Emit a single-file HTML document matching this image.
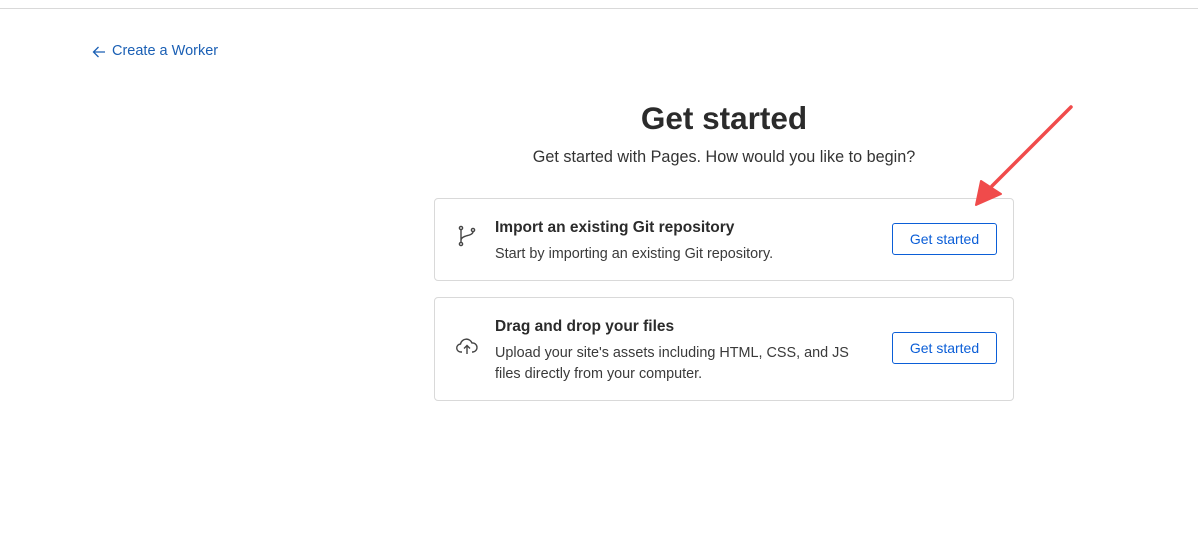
<!DOCTYPE html>
<html><head><meta charset="utf-8"><style>
*{margin:0;padding:0;box-sizing:border-box}
body{width:1198px;height:536px;background:#fff;font-family:"Liberation Sans",sans-serif;position:relative;overflow:hidden;color:#313131}
.top{position:absolute;left:0;top:8px;width:1198px;height:1px;background:#d9d9d9}
.back{position:absolute;left:112px;top:43px;font-size:14.5px;color:#1a5fb4}
h1{position:absolute;left:0;width:1448px;text-align:center;top:100px;font-size:31.5px;font-weight:bold;color:#2b2b2b}
.sub{position:absolute;left:0;width:1448px;text-align:center;top:148px;font-size:16.2px;color:#333}
.card{position:absolute;left:434px;width:580px;border:1px solid #d9d9d9;border-radius:4px}
.t{position:absolute;left:60px;font-size:15.5px;font-weight:bold;color:#2b2b2b}
.d{position:absolute;left:60px;font-size:14.4px;line-height:21px;color:#3a3a3a}
.btn{position:absolute;left:457px;width:105px;height:32px;border:1px solid #0b5ed7;border-radius:3px;color:#0b5ed7;font-size:14px;text-align:center;line-height:30px}
svg.ic{position:absolute;left:20px}
</style></head><body>
<div class="top"></div>
<svg style="position:absolute;left:92px;top:45px" width="14" height="14" viewBox="0 0 14 14" fill="none" stroke="#1a5fb4" stroke-width="1.3"><path d="M13 7H1.5M6.5 2L1.5 7l5 5"/></svg>
<div class="back">Create a Worker</div>
<h1>Get started</h1>
<div class="sub">Get started with Pages. How would you like to begin?</div>
<div class="card" style="top:198px;height:83px">
<svg class="ic" style="top:25px" width="24" height="24" viewBox="0 0 24 24" fill="none" stroke="#444" stroke-width="1.4"><circle cx="6" cy="4" r="1.6"/><circle cx="6" cy="20" r="1.6"/><circle cx="18" cy="6" r="1.6"/><path d="M6 5.6V18.4M18 7.6c0 5-12 3-12 9"/></svg>
<div class="t" style="top:20px">Import an existing Git repository</div>
<div class="d" style="top:45px">Start by importing an existing Git repository.</div>
<div class="btn" style="top:24px">Get started</div>
</div>
<div class="card" style="top:297px;height:104px">
<svg class="ic" style="top:36px" width="24" height="24" viewBox="0 0 24 24" fill="none" stroke="#444" stroke-width="1.4"><path d="M7 18H6a4 4 0 0 1-.5-8A6 6 0 0 1 17 9a4.5 4.5 0 0 1 1 9h-1"/><path d="M12 20v-8M9 14.5l3-3 3 3"/></svg>
<div class="t" style="top:20px">Drag and drop your files</div>
<div class="d" style="top:45px">Upload your site's assets including HTML, CSS, and JS<br>files directly from your computer.</div>
<div class="btn" style="top:34px">Get started</div>
</div>
<svg style="position:absolute;left:0;top:0" width="1198" height="536"><path d="M1071 107L992 186" stroke="#f04b4b" stroke-width="3.5" stroke-linecap="round"/><path d="M976 205L981 181L1001 194Z" fill="#f04b4b" stroke="#f04b4b" stroke-width="2" stroke-linejoin="round"/></svg>
</body></html>
